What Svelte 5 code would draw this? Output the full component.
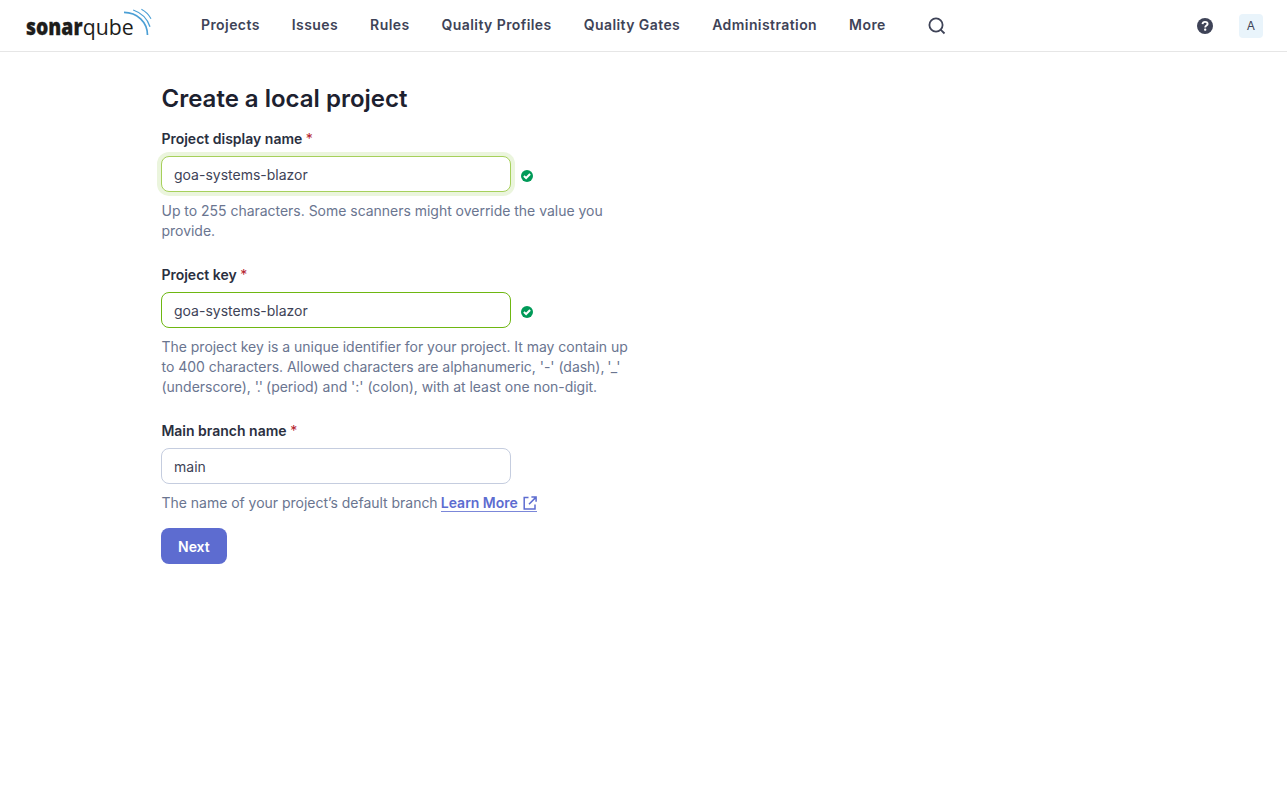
<script>
  const links = ['Projects', 'Issues', 'Rules', 'Quality Profiles', 'Quality Gates', 'Administration', 'More'];
  let displayName = $state('goa-systems-blazor');
  let projectKey = $state('goa-systems-blazor');
  let branch = $state('main');
</script>

{#snippet check()}
  <svg class="check" width="12" height="12" viewBox="0 0 12 12" aria-hidden="true">
    <circle cx="6" cy="6" r="6" fill="#009a58" />
    <path d="M2.9 6 5.1 8 9.1 4" fill="none" stroke="#fff" stroke-width="2" />
  </svg>
{/snippet}

<header>
  <svg class="logo" width="128" height="32" viewBox="0 0 128 32" role="img" aria-label="sonarqube">
    <text class="logo-bold" transform="translate(1 27.2)" textLength="56.5" lengthAdjust="spacingAndGlyphs">sonar</text>
    <text class="logo-light" transform="translate(57.8 27.2) scale(1 .95)" textLength="51" lengthAdjust="spacingAndGlyphs">qube</text>
    <g fill="none" stroke="#4b9fd5">
      <path d="M99 4.3C112 4.3 122.5 14 122.5 27" stroke-width="1.7" />
      <path d="M108.2 2C116 4.7 122.5 10.8 125 18.8" stroke-width="1.3" />
      <path d="M116.4 1.3C120.8 3.6 124 7 126 10.8" stroke-width="1.1" />
    </g>
  </svg>
  <nav>
    {#each links as link}<span>{link}</span>{/each}
  </nav>
  <svg class="search" width="18" height="18" viewBox="0 0 18 18" fill="none" stroke="#3e4357" stroke-width="1.8">
    <circle cx="8" cy="8" r="6.6" />
    <path d="M12.6 12.6 16.5 16.5" />
  </svg>
  <svg class="help" width="16" height="16" viewBox="0 0 16 16">
    <circle cx="8" cy="8" r="8" fill="#3e4357" />
    <path d="M5.5 6.1C5.7 4.6 6.6 3.9 8 3.9c1.5 0 2.6.8 2.6 2.1C10.6 7.6 8.2 7.5 8.2 9.4" fill="none" stroke="#fff" stroke-width="1.9" />
    <rect x="7.1" y="10.5" width="2.2" height="2.2" rx=".7" fill="#fff" />
  </svg>
  <span class="avatar">A</span>
</header>

<main>
  <h1>Create a local project</h1>

  <section class="first">
    <label for="name">Project display name <b>*</b></label>
    <div class="field"><input id="name" class="valid focused" bind:value={displayName} />{@render check()}</div>
    <p>Up to 255 characters. Some scanners might override the value you provide.</p>
  </section>

  <section>
    <label for="key">Project key <b>*</b></label>
    <div class="field"><input id="key" class="valid" bind:value={projectKey} />{@render check()}</div>
    <p>The project key is a unique identifier for your project. It may contain up to 400 characters. Allowed characters are alphanumeric, '-' (dash), <i>'_'</i> (underscore), <i class="dot">'.'</i> (period) and ':' (colon), with at least one non-digit.</p>
  </section>

  <section>
    <label for="branch">Main branch name <b>*</b></label>
    <div class="field"><input id="branch" bind:value={branch} /></div>
    <p>The name of your project’s default branch <span class="more">Learn More<svg width="14" height="14" viewBox="0 0 14 14" fill="none" stroke="#5d6cd0" stroke-width="1.5"><path d="M5.5 1.6H1.2V12.9H12V8.6M6 8.2 12.3 1.9M8.4 1H13.1V5.7" /></svg></span></p>
  </section>

  <button type="button">Next</button>
</main>

<style>
  :global(body) {
    background: #fff;
    font-family: Inter, sans-serif;
    font-size: 14px;
    line-height: 20px;
  }
  header {
    box-sizing: border-box;
    height: 52px;
    display: flex;
    align-items: center;
    padding: 0 24px 0 25px;
    border-bottom: 1px solid #e6e6e6;
  }
  .logo {
    display: block;
    margin-bottom: 3px;
    flex: none;
    overflow: visible;
  }
  .logo text {
    font-family: 'Open Sans', sans-serif;
    font-size: 23px;
    fill: #1d1d1b;
  }
  .logo .logo-bold {
    font-weight: 800;
    stroke: #1d1d1b;
    stroke-width: 0.3px;
  }
  .logo .logo-light { font-weight: 400; }
  nav {
    display: flex;
    gap: 32px;
    margin-left: 48px;
    padding-bottom: 1px;
    color: #3e4357;
    font-weight: 600;
    letter-spacing: 0.42px;
    white-space: nowrap;
  }
  .search { margin-left: 42px; margin-top: 1px; }
  .help { margin-left: auto; margin-top: 1px; }
  .avatar {
    width: 24px;
    height: 24px;
    margin-left: 26px;
    margin-top: 1px;
    border-radius: 4px;
    background: #e9f4fb;
    color: #3e4357;
    font-size: 12px;
    line-height: 24px;
    text-align: center;
  }
  main { padding: 31px 0 0 161px; }
  h1 {
    margin: 0;
    padding-left: 0.5px;
    color: #1d212f;
    font-size: 24px;
    line-height: 32px;
    font-weight: 600;
  }
  section { width: 480px; margin-top: 24px; }
  .first { margin-top: 14px; }
  label {
    display: block;
    padding-left: 0.4px;
    color: #2a2f40;
    font-weight: 600;
  }
  label b { color: #b4232c; font-weight: 400; }
  .field {
    display: flex;
    align-items: center;
    gap: 10px;
    margin-top: 7px;
  }
  input {
    box-sizing: border-box;
    width: 350px;
    height: 36px;
    padding: 0 12px;
    border: 1px solid #c5cddf;
    border-radius: 8px;
    outline: none;
    background: #fff;
    color: #3e4357;
    font: 400 14px/20px Inter, sans-serif;
  }
  .valid { border-color: #6eb712; }
  .focused { border-color: #a6d05b; box-shadow: 0 0 0 4px #ebf5dd; }
  .check { margin-top: 4px; }
  p {
    margin: 9px 0 0;
    padding-left: 0.5px;
    color: #6a7590;
    letter-spacing: -0.025px;
  }
  i { font-style: normal; letter-spacing: -0.8px; margin-left: -1px; }
  .dot { letter-spacing: -0.9px; margin-left: 0; }
  .more {
    display: inline-flex;
    align-items: center;
    height: 17px;
    margin-left: -0.7px;
    line-height: 17px;
    border-bottom: 1px solid #7b87d9;
    color: #5d6cd0;
    font-weight: 600;
  }
  .more svg { margin-left: 5px; }
  button {
    display: block;
    height: 36px;
    margin-top: 15px;
    padding: 2px 17px 0;
    border: 0;
    border-radius: 8px;
    background: #5d6cd0;
    color: #fff;
    font: 600 14px/20px Inter, sans-serif;
  }
</style>
